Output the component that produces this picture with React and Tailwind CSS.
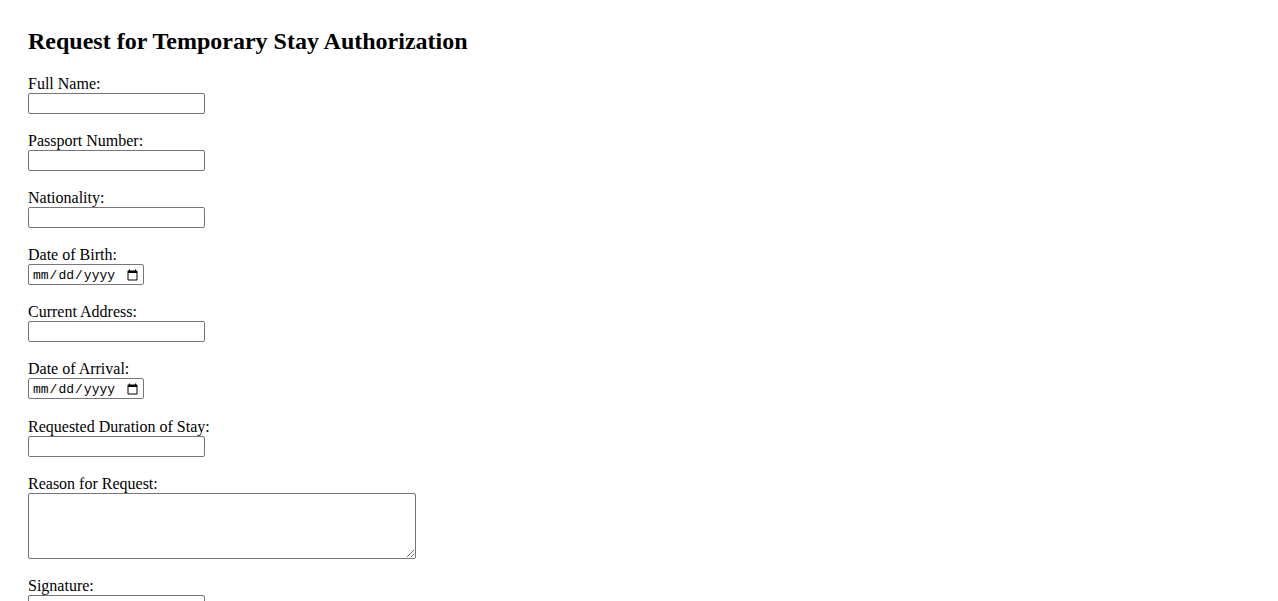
import React from 'react';

const fields = [
  { label: 'Full Name:', type: 'text' },
  { label: 'Passport Number:', type: 'text' },
  { label: 'Nationality:', type: 'text' },
  { label: 'Date of Birth:', type: 'date' },
  { label: 'Current Address:', type: 'text' },
  { label: 'Date of Arrival:', type: 'date' },
  { label: 'Requested Duration of Stay:', type: 'text', nudge: true },
  { label: 'Reason for Request:', type: 'textarea' },
  { label: 'Signature:', type: 'text' },
];

function Field({ label, type, nudge }) {
  let control;
  if (type === 'textarea') {
    control = (
      <textarea className="block w-[388px] h-[66px] border border-[#767676] rounded-[2px] bg-white px-[2px] py-[2px] font-['Liberation_Mono',monospace] text-[13px]" />
    );
  } else if (type === 'date') {
    control = (
      <input
        type="date"
        className="block w-[116px] h-[21px] border border-[#767676] rounded-[2px] bg-white pl-[3px] pr-[2px] pt-[2px] font-['Liberation_Mono',monospace] text-[13px] leading-none text-black"
      />
    );
  } else {
    control = (
      <input
        type="text"
        className="block w-[177px] h-[21px] border border-[#767676] rounded-[2px] bg-white px-[2px] text-[13px]"
      />
    );
  }
  return (
    <div className={nudge ? 'flex flex-col mt-[1px]' : 'flex flex-col'}>
      <label className="block h-[18px] leading-[18px]">{label}</label>
      {control}
    </div>
  );
}

export default function App() {
  return (
    <div className="min-h-screen bg-white text-black font-['Liberation_Serif',serif] text-[16px] pt-[27px] pl-[28px]">
      <h2 className="text-[24px] font-bold leading-[28px] mb-[20px]">
        Request for Temporary Stay Authorization
      </h2>
      <form className="flex flex-col gap-[18px]">
        {fields.map((f) => (
          <Field key={f.label} {...f} />
        ))}
      </form>
    </div>
  );
}
